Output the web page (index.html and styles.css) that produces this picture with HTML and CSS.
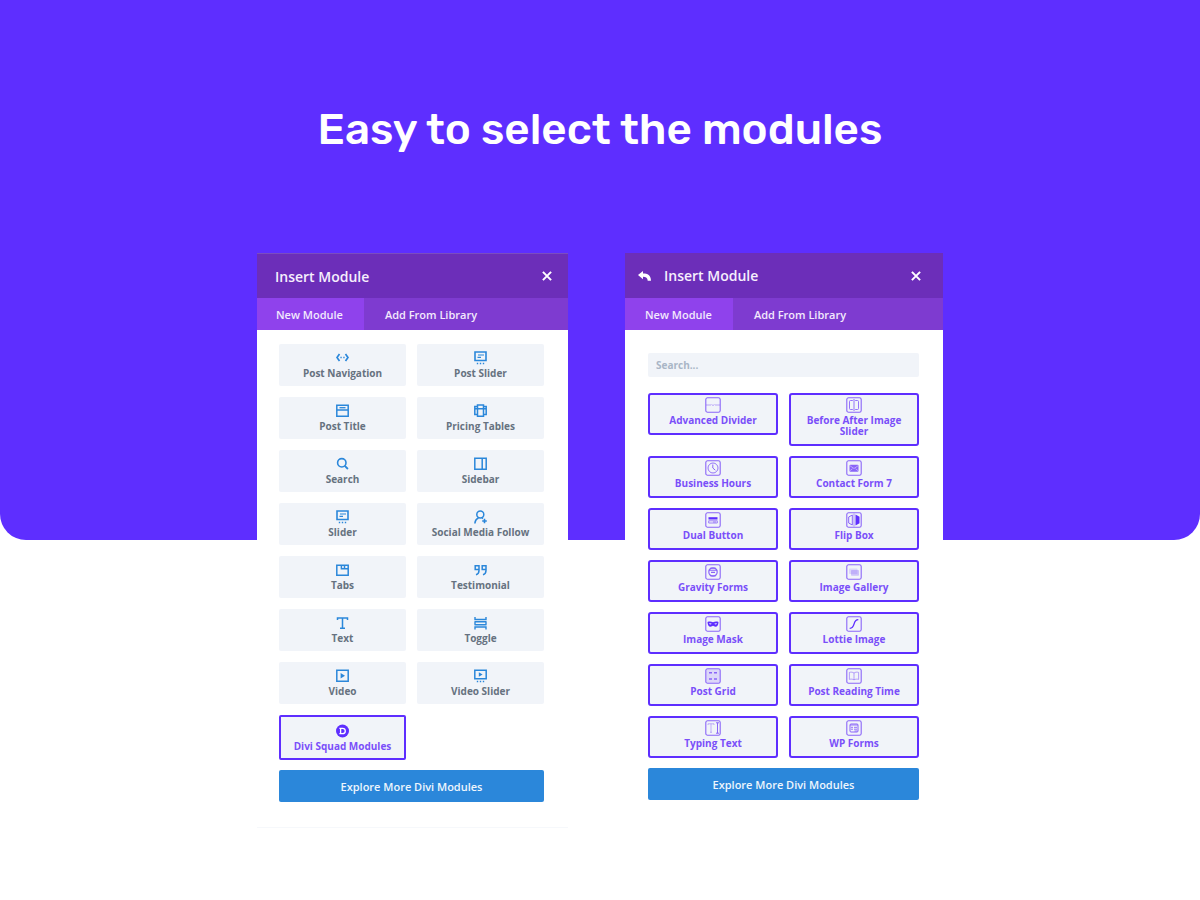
FILE: index.html
```html
<!DOCTYPE html>
<html lang="en">
<head>
<meta charset="utf-8">
<meta name="viewport" content="width=device-width, initial-scale=1">
<title>Easy to select the modules</title>
<link rel="stylesheet" href="styles.css">
</head>
<body>
<svg class="sprite" aria-hidden="true">
  <symbol id="slider" viewBox="0 0 13 14"><path d="M1 1h11v8.500H1z" fill="none" stroke="currentColor" stroke-width="1.600"/><path d="M4 4h6M3.500 6.400h3.500" stroke="currentColor" stroke-width="1.200"/><path d="M2.800 12.500h1.400M5.800 12.500h1.400M8.800 12.500h1.400" stroke="currentColor" stroke-width="1.300"/></symbol>
  <symbol id="frame" viewBox="0 0 16 16"><rect x=".8" y=".8" width="14.400" height="14.400" rx="1.800" fill="none" stroke="currentColor" stroke-width="1.100"/></symbol>
</svg>
<header class="hero"><h1 class="hero-title">Easy to select the modules</h1></header>
<main class="panels">
  <section class="panel" aria-label="Standard modules">
    <div class="panel-head panel-head-lined">
      <h2 class="panel-title">Insert Module</h2>
      <button class="icon-button" aria-label="Close"><svg class="close-icon" viewBox="0 0 10 10"><path d="M.9.9l8.200 8.200M9.100.9L.9 9.100"/></svg></button>
    </div>
    <div class="tabs"><button class="tab tab-active">New Module</button><button class="tab">Add From Library</button></div>
    <div class="panel-body">
      <div class="modules">
        <button class="module"><svg class="icon" viewBox="0 0 13 14"><path d="M3.500 3L1 6.500 3.500 10M9.500 3L12 6.500 9.500 10" fill="none" stroke="currentColor" stroke-width="1.700"/><path d="M4.400 6.500h1.300M7.300 6.500h1.300" stroke="currentColor" stroke-width="1.400"/></svg>Post Navigation</button>
        <button class="module"><svg class="icon"><use href="#slider"/></svg>Post Slider</button>
        <button class="module"><svg class="icon" viewBox="0 0 13 14"><path d="M.8 1.300h11.400v11H.8zM1 6h11" fill="none" stroke="currentColor" stroke-width="1.500"/><path d="M3.500 3.700h6" stroke="currentColor" stroke-width="1.300"/></svg>Post Title</button>
        <button class="module"><svg class="icon" viewBox="0 0 13 14"><path d="M3.500 1h6v11.200h-6zM3.500 2.500H.8v8h2.700M9.500 2.500h2.700v8H9.500M1 4.700h11" fill="none" stroke="currentColor" stroke-width="1.500"/></svg>Pricing Tables</button>
        <button class="module"><svg class="icon" viewBox="0 0 13 14"><circle cx="5.800" cy="5.800" r="4.200" fill="none" stroke="currentColor" stroke-width="1.600"/><path d="M8.800 8.800l3.100 3.200" stroke="currentColor" stroke-width="1.800"/></svg>Search</button>
        <button class="module"><svg class="icon" viewBox="0 0 13 14"><path d="M.8 1.300h11.400v11H.8zM8.200 1.500v11" fill="none" stroke="currentColor" stroke-width="1.500"/></svg>Sidebar</button>
        <button class="module"><svg class="icon"><use href="#slider"/></svg>Slider</button>
        <button class="module"><svg class="icon" viewBox="0 0 13 14"><circle cx="6.300" cy="4.400" r="3.500" fill="none" stroke="currentColor" stroke-width="1.500"/><path d="M.9 13.500c.2-3 1.600-4.800 3.600-5.600M8 7.800l1 .7M10.500 8.700v4.600M8.200 11h4.600" fill="none" stroke="currentColor" stroke-width="1.600"/></svg>Social Media Follow</button>
        <button class="module"><svg class="icon" viewBox="0 0 13 14"><path d="M.8 2.300h11.400v9.900H.8zM5.400 2.300v3.500H12M8.500 2.500v3" fill="none" stroke="currentColor" stroke-width="1.500"/></svg>Tabs</button>
        <button class="module"><svg class="icon" viewBox="0 0 13 14"><path d="M5 6.500H1.200V2.800H5v4.700c0 2.200-1 3.700-3 4.300M12 6.500H8.200V2.800H12v4.700c0 2.200-1 3.700-3 4.300" fill="none" stroke="currentColor" stroke-width="1.500"/></svg>Testimonial</button>
        <button class="module"><svg class="icon" viewBox="0 0 13 14"><path d="M1.500 4V2.100h10V4M6.500 2v10.300M4 12.300h5" fill="none" stroke="currentColor" stroke-width="1.500"/></svg>Text</button>
        <button class="module"><svg class="icon" viewBox="0 0 13 14"><path d="M1 1v2.500h11V1M1 13.500V11h11v2.500M.5 5.700h12M.5 8.800h12M1 5.700v3M12 5.700v3" fill="none" stroke="currentColor" stroke-width="1.400"/></svg>Toggle</button>
        <button class="module"><svg class="icon" viewBox="0 0 13 14"><path d="M.8 1.300h11.400v11H.8z" fill="none" stroke="currentColor" stroke-width="1.500"/><path d="M4.600 4v5.600L9 6.800z" fill="currentColor"/></svg>Video</button>
        <button class="module"><svg class="icon" viewBox="0 0 13 14"><path d="M.8 1.300h11.400v8.400H.8z" fill="none" stroke="currentColor" stroke-width="1.500"/><path d="M4.800 3.200v4.600l3.800-2.300z" fill="currentColor"/><path d="M2.800 12.500h1.400M5.800 12.500h1.400M8.800 12.500h1.400" stroke="currentColor" stroke-width="1.300"/></svg>Video Slider</button>
        <button class="module module-divi"><svg class="icon" viewBox="0 0 13 14"><circle cx="6.500" cy="7" r="6.500" fill="#5e2eff"/><path d="M4.600 4.300H6.500c1.700 0 2.800 1.100 2.800 2.700S8.200 9.700 6.500 9.700H4.600zM3.400 4.300h2M3.400 9.700h2" fill="none" stroke="#fff" stroke-width="1.300"/></svg>Divi Squad Modules</button>
      </div>
      <button class="explore">Explore More Divi Modules</button>
    </div>
  </section>

  <section class="panel panel-squad" aria-label="Squad modules">
    <div class="panel-head">
      <button class="icon-button" aria-label="Back"><svg class="back-icon" viewBox="0 0 13 10"><path d="M0 4L5 0v2.500c4.800 0 7.800 1.800 8 7.200H9.700C9.700 6.800 8 5.700 5 5.700V8.300z" fill="#fff"/></svg></button>
      <h2 class="panel-title">Insert Module</h2>
      <button class="icon-button" aria-label="Close"><svg class="close-icon" viewBox="0 0 10 10"><path d="M.9.9l8.200 8.200M9.100.9L.9 9.100"/></svg></button>
    </div>
    <div class="tabs"><button class="tab tab-active">New Module</button><button class="tab">Add From Library</button></div>
    <div class="panel-body">
      <input class="search" type="search" placeholder="Search..." aria-label="Search modules">
      <div class="modules">
        <button class="module"><svg class="icon" viewBox="0 0 16 16"><use href="#frame"/><path d="M1 8h5M10 8h5M6.500 7.500L8 8.500l1.500-1" fill="none" stroke="currentColor" stroke-width=".8" opacity=".7"/></svg>Advanced Divider</button>
        <button class="module"><svg class="icon" viewBox="0 0 16 16"><use href="#frame"/><path d="M6.800 3.500H4.500a1 1 0 0 0-1 1v7a1 1 0 0 0 1 1h2.300M9.200 3.500h2.300a1 1 0 0 1 1 1v7a1 1 0 0 1-1 1H9.200M8 2v12" fill="none" stroke="currentColor" stroke-width=".9"/></svg>Before After Image Slider</button>
        <button class="module"><svg class="icon" viewBox="0 0 16 16"><use href="#frame"/><circle cx="8" cy="8" r="5" fill="none" stroke="currentColor" stroke-width=".9"/><path d="M7.800 4.500V8l2.500 2.200" fill="none" stroke="currentColor"/></svg>Business Hours</button>
        <button class="module"><svg class="icon" viewBox="0 0 16 16"><use href="#frame"/><rect x="3.500" y="4.700" width="9" height="7" rx="1" fill="currentColor"/><path d="M4 5.800l4 2.700 4-2.700M4 10.700l2.500-2M12 10.700l-2.500-2" fill="none" stroke="#ddd5fb" stroke-width=".6"/></svg>Contact Form 7</button>
        <button class="module"><svg class="icon" viewBox="0 0 16 16"><use href="#frame"/><path d="M3.500 5.200h9V7.500h-9z" fill="#5e2eff"/><path d="M3.700 8.800h8.600v2.200H3.700zM8 10h3" fill="none" stroke="currentColor" stroke-width=".8"/></svg>Dual Button</button>
        <button class="module"><svg class="icon" viewBox="0 0 16 16"><use href="#frame"/><path d="M6.300 3v10L2.700 11V5z" fill="none" stroke="currentColor"/><path d="M8 1.500v13" stroke="currentColor" stroke-width=".7"/><path d="M9.500 2.500l4 2.300v6.400l-4 2.300z" fill="#5e2eff"/></svg>Flip Box</button>
        <button class="module"><svg class="icon" viewBox="0 0 16 16"><use href="#frame"/><circle cx="8" cy="8" r="4.200" fill="none" stroke="currentColor" stroke-width="1.200"/><path d="M5 4.300h6M3.800 6.200h8.400M6 8.400h4M5 11.700h6" stroke="currentColor" stroke-width="1.100"/></svg>Gravity Forms</button>
        <button class="module"><svg class="icon" viewBox="0 0 16 16"><use href="#frame"/><rect x="3" y="4.500" width="8.500" height="5.500" rx=".8" fill="currentColor" opacity=".2"/><rect x="5" y="6" width="8" height="5.800" rx=".8" fill="currentColor" opacity=".35"/></svg>Image Gallery</button>
        <button class="module"><svg class="icon" viewBox="0 0 16 16"><use href="#frame"/><path fill-rule="evenodd" d="M2.500 6c1.800-.8 3.500-.6 5.500.2 2-.8 3.700-1 5.500-.2-.1 3-1.200 4.700-3 4.700-1.200 0-1.800-.9-2.500-1-.7.100-1.300 1-2.500 1-1.800 0-2.900-1.700-3-4.700zM4 7.500c.7 1.300 1.900 1.400 2.800.3C5.800 7.100 5 7 4 7.500zm8 0c-.7 1.300-1.900 1.400-2.800.3C10.200 7.100 11 7 12 7.500z" fill="#5e2eff"/></svg>Image Mask</button>
        <button class="module"><svg class="icon" viewBox="0 0 16 16"><use href="#frame"/><path d="M3.700 12.300c6.300.2 2.300-8.300 8.600-8.600" fill="none" stroke="#5e2eff" stroke-width="1.300"/></svg>Lottie Image</button>
        <button class="module"><svg class="icon" viewBox="0 0 16 16"><rect x="1" y="1" width="14" height="14" rx="2" fill="currentColor" opacity=".2"/><use href="#frame"/><path d="M4 4.700h3M9 4.700h3M4 11h3M9 11h3" stroke="currentColor" stroke-width="1.500"/></svg>Post Grid</button>
        <button class="module"><svg class="icon" viewBox="0 0 16 16"><use href="#frame"/><path d="M8 5C6.500 4 5 4 3.400 4.400v7C5 11 6.500 11 8 11.800c1.500-.8 3-.8 4.600-.4v-7C11 4 9.500 4 8 5zm0 0v6.800" fill="none" stroke="currentColor" stroke-width=".8" opacity=".75"/></svg>Post Reading Time</button>
        <button class="module"><svg class="icon" viewBox="0 0 16 16"><use href="#frame"/><path d="M3 5V3.800h6V5M6 3.800v8.500M5 12.300h2" fill="none" stroke="currentColor" stroke-width=".8" opacity=".6"/><path d="M11 2.800h3M12.500 2.800v10.400M11 13.200h3" stroke="currentColor"/></svg>Typing Text</button>
        <button class="module"><svg class="icon" viewBox="0 0 16 16"><use href="#frame"/><rect x="4" y="4" width="8" height="8" rx="1" fill="none" stroke="currentColor"/><path d="M4 5h8M5 7.300h2M8 7.300h3M5 9.200h2M8 9.200h3M8.500 11h3" stroke="currentColor" stroke-width=".9"/></svg>WP Forms</button>
      </div>
      <button class="explore">Explore More Divi Modules</button>
    </div>
  </section>
</main>
</body>
</html>
```
FILE: styles.css
```css
* { box-sizing: border-box; }

body {
  margin: 0;
  background: #fff;
  font-family: "Open Sans", "Noto Sans", sans-serif;
}

button {
  border: 0;
  padding: 0;
  background: none;
  font: inherit;
  cursor: pointer;
}

.sprite { display: block; width: 0; height: 0; }

.hero {
  min-height: 540px;
  padding-top: 101px;
  background: #5e2eff;
  border-radius: 0 0 26px 26px;
  text-align: center;
}

.hero-title {
  margin: 0;
  color: #fff;
  font: 500 44px/56px Rubik, Roboto, sans-serif;
}

.panels {
  display: flex;
  justify-content: center;
  align-items: flex-start;
  gap: 57px;
  margin-top: -287px;
  padding-bottom: 72px;
}

.panel {
  flex: 0 1 311px;
  background: #fff;
  border-bottom: 1px solid #f6f8fb;
}

.panel-squad { flex-basis: 318px; border-bottom: 0; }

.panel-head {
  display: flex;
  align-items: center;
  height: 45px;
  padding: 0 16px 0 18px;
  background: #6c2eb9;
}

.panel-head-lined { border-top: 1px solid #7b4cc0; }

.panel-squad .panel-head { gap: 13px; padding: 0 22px 0 13px; }

.panel-title {
  flex: 1;
  margin: 0;
  color: #f6effd;
  font-size: 14px;
  font-weight: 600;
}

.icon-button { display: flex; }

.close-icon { width: 10px; height: 10px; fill: none; stroke: #fff; stroke-width: 2; }

.back-icon { width: 13px; height: 10px; }

.tabs { display: flex; background: #7e3bd0; }

.tab {
  height: 32px;
  padding: 0 21px;
  color: #f3e9fd;
  font-size: 11px;
  font-weight: 600;
}

.tab-active { padding-left: 19px; background: #8f42ec; }

.panel-squad .tab-active { padding: 0 21px 0 20px; }

.panel-body { padding: 14px 24px 25px 22px; }

.panel-squad .panel-body { padding: 23px 24px 25px 23px; }

.search {
  display: block;
  width: 100%;
  height: 24px;
  margin-bottom: 16px;
  padding: 0 8px;
  border: 0;
  border-radius: 2px;
  background: #f1f4f9;
  color: #4c5866;
  font: 700 10px/24px "Open Sans", "Noto Sans", sans-serif;
}

.search::placeholder { color: #a9b6c6; opacity: 1; }

.modules {
  display: grid;
  grid-template-columns: 1fr 1fr;
  align-items: start;
  gap: 11px;
}

.panel-squad .modules { row-gap: 10px; }

.module {
  display: flex;
  flex-direction: column;
  align-items: center;
  justify-content: flex-start;
  gap: 2px;
  min-height: 42px;
  padding: 7px 4px 5px;
  border-radius: 2px;
  background: #f1f4f9;
  color: #667280;
  font-size: 10px;
  font-weight: 700;
  line-height: 12px;
}

.icon { flex: none; width: 13px; height: 14px; color: #2b87da; }

.module-divi {
  min-height: 45px;
  border: 2px solid #5e2eff;
  color: #7a4ff9;
}

.panel-squad .module {
  padding: 2px 10px 7px;
  border: 2px solid #5e2eff;
  border-radius: 3px;
  color: #7a4ff9;
  line-height: 11px;
}

.panel-squad .icon { width: 16px; height: 16px; color: #8a65f8; }

.explore {
  width: 100%;
  height: 32px;
  margin-top: 10px;
  border-radius: 2px;
  background: #2b87da;
  color: #eef6fd;
  font-size: 11px;
  font-weight: 600;
}
```
